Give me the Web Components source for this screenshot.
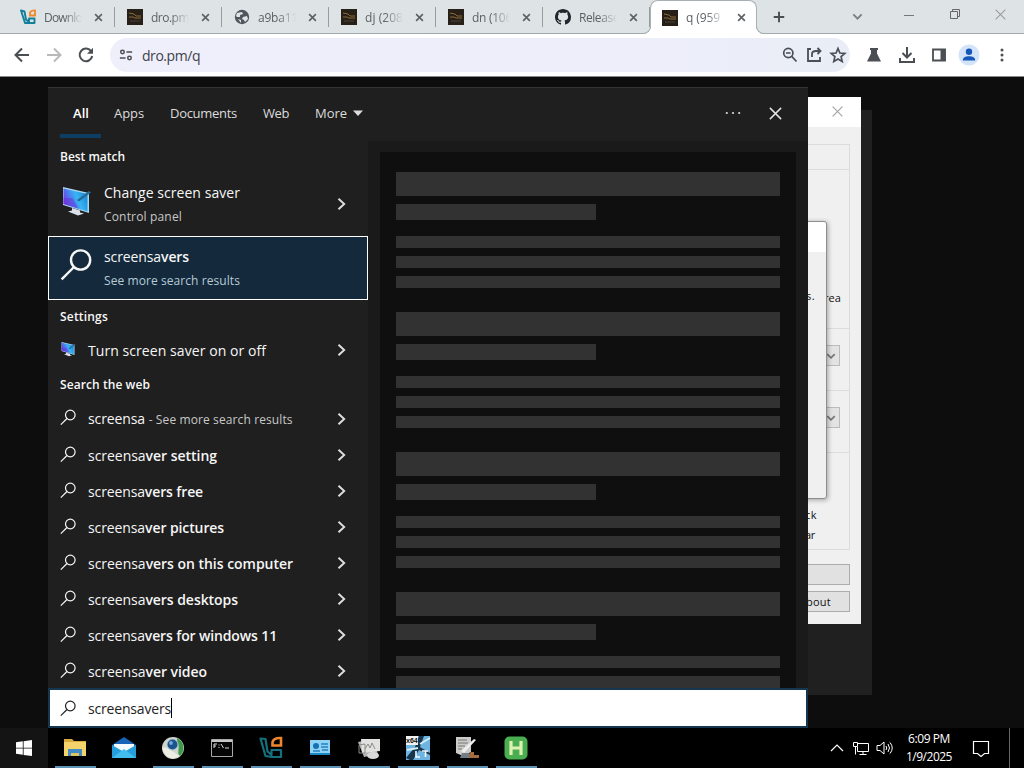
<!DOCTYPE html>
<html lang="en">
<head>
<meta charset="utf-8">
<title>Desktop</title>
<style>
html,body{margin:0;height:100%;overflow:hidden;background:#0d0d0d}
body{font-family:"Open Sans","Noto Sans",sans-serif;font-size:14px}
</style>
</head>
<body>
<desktop-screen></desktop-screen>
<script>
const define = (name, html, setup) => customElements.define(name, class extends HTMLElement {
  connectedCallback() {
    if (this.shadowRoot) return;
    const root = this.attachShadow({mode: 'open'});
    root.innerHTML = typeof html === 'function' ? html(this) : html;
    if (setup) setup(this, root);
  }
});

/* ---------- icons ---------- */
const monitor = `<defs><linearGradient id="g" x1="0" y1=".7" x2="1" y2=".3"><stop offset="0" stop-color="#7a2fe0"/><stop offset=".35" stop-color="#4a80f0"/><stop offset=".6" stop-color="#38b5f3"/><stop offset="1" stop-color="#1c86d8"/></linearGradient></defs><path d="M3 2l26 6v20L3 20z" fill="#a9d8ef"/><path d="M3.500 3.500L27.500 9v17.500L3.500 19z" fill="url(#g)"/><path d="M3.500 13l9 0 6 10.700L3.500 19z" fill="#6a2fd8" opacity=".5"/><path d="M17 15L29 6l2 1.500-12 9z" fill="#246b98"/><path d="M12 23l8 2.500v2l4 1-6 2-10-4 4-1z" fill="#dce0ea"/>`;
const lens = `<circle cx="10.300" cy="6" r="4.800" fill="none" stroke="currentColor" stroke-width="1.200"/><path d="M7 9.500L.8 15.700" stroke="currentColor" stroke-width="1.200"/>`;
const icons = {
  vs: [16, `<path d="M1 1.500l3.500 1 1.500 8 3 2.500V9.500h5.500v4.500H9.500L5 14z" fill="none" stroke="#137f9a" stroke-width="1.900" stroke-linejoin="round"/><path d="M10 6.500V3.500q1.500-2.500 5-2v5z" fill="none" stroke="#ee8a2b" stroke-width="1.900"/>`],
  dro: [16, `<path fill="#272019" d="M0 0h16v16H0z"/><path d="M2 4l5 1 2 2h5M2 8h4l2 1h6" stroke="#8d6a35" fill="none"/><path d="M3 12h10" stroke="#4d4336"/>`],
  globe: [16, `<circle cx="8" cy="8" r="7.200" fill="#50565c"/><path d="M3 4l5-1 1 2-3 1v2H3l-1-1zM9 8l4-1 1 3-3 3-1-2-2-1zM4 10l3 1v3z" fill="#dfe4e7"/>`],
  github: [16, `<path fill="#20262c" d="M8 0C3.580 0 0 3.580 0 8c0 3.540 2.290 6.530 5.470 7.590.4.070.55-.17.55-.38 0-.19-.01-.82-.01-1.490-2.010.37-2.530-.49-2.690-.94-.09-.23-.48-.94-.82-1.130-.28-.15-.68-.52-.01-.53.63-.01 1.080.58 1.230.82.72 1.210 1.870.87 2.330.66.07-.52.28-.87.51-1.070-1.780-.2-3.640-.89-3.640-3.950 0-.87.31-1.590.82-2.150-.08-.2-.36-1.020.08-2.120 0 0 .67-.21 2.200.82.64-.18 1.320-.27 2-.27s1.360.09 2 .27c1.530-1.040 2.200-.82 2.200-.82.44 1.100.16 1.920.08 2.120.51.56.82 1.270.82 2.150 0 3.070-1.870 3.750-3.650 3.950.29.25.54.73.54 1.480 0 1.070-.01 1.930-.01 2.200 0 .21.15.46.55.38A8 8 0 0 0 16 8c0-4.420-3.580-8-8-8z"/>`],
  x: [16, `<path d="M2 2l12 12M14 2L2 14" stroke="currentColor" stroke-width="var(--sw,2.900)" fill="none"/>`],
  plus: [16, `<path d="M8 2v12M2 8h12" stroke="currentColor" stroke-width="2.200"/>`],
  down: [16, `<path d="M2 5l6 6 6-6" stroke="currentColor" stroke-width="2.800" fill="none"/>`],
  right: [16, `<path d="M4 2l6.500 6L4 14" stroke="currentColor" stroke-width="2.200" fill="none"/>`],
  min: [12, `<path d="M1 6.500h10" stroke="currentColor"/>`],
  restore: [12, `<path d="M1.500 3.500h7v7h-7zM3.500 3.500v-2h7v7h-2" fill="none" stroke="currentColor"/>`],
  back: [16, `<path d="M15 8H2M8 1.500L1.500 8 8 14.500" fill="none" stroke="currentColor" stroke-width="2"/>`],
  fwd: [16, `<path d="M1 8h13M8 1.500L14.500 8 8 14.500" fill="none" stroke="currentColor" stroke-width="2"/>`],
  reload: [16, `<path d="M13.300 4.500A6.300 6.300 0 1 0 14.200 9" fill="none" stroke="currentColor" stroke-width="2"/><path d="M15 .8v6H9z" fill="currentColor"/>`],
  tune: [16, `<g fill="none" stroke="currentColor" stroke-width="1.700"><circle cx="4" cy="4.500" r="2"/><path d="M8.500 4.500H15M1 11.500h6.500"/><circle cx="12" cy="11.500" r="2"/></g>`],
  zoomout: [16, `<g fill="none" stroke="currentColor" stroke-width="1.700"><circle cx="6.300" cy="6" r="4.600"/><path d="M9.700 9.300l4.800 5.200M4 6h4.600"/></g>`],
  share: [16, `<g fill="none" stroke="currentColor" stroke-width="1.800"><path d="M5 2H2v12h12v-4M6 10V7q0-3 4-3h4M11.500 1l3 3-3 3"/></g>`],
  star: [16, `<path d="M8 1.500l1.900 4.500 4.900.4-3.700 3.200 1.100 4.800L8 11.900l-4.200 2.500 1.100-4.800L1.200 6.400 6.100 6z" fill="none" stroke="currentColor" stroke-width="1.700"/>`],
  flask: [16, `<path d="M4 1h8v2h-1v3.500l4 8H1l4-8V3H4z" fill="currentColor"/>`],
  download: [18, `<path d="M9 1v10M4.500 7L9 11.500 13.500 7M2 12v4h14v-4" fill="none" stroke="currentColor" stroke-width="2"/>`],
  side: [16, `<path d="M2 2.500h12v11H2z" fill="none" stroke="currentColor" stroke-width="1.800"/><path d="M9.500 2h5v12h-5z" fill="currentColor"/>`],
  person: [22, `<circle cx="11" cy="11" r="10.500" fill="#d3e3f8"/><circle cx="11" cy="7.800" r="3.200" fill="#1558b8"/><path d="M4.800 16.500c0-3 2.500-4.300 6.200-4.300s6.200 1.300 6.200 4.300z" fill="#1558b8"/>`],
  dots: [16, `<g fill="currentColor"><circle cx="8" cy="3" r="1.500"/><circle cx="8" cy="8" r="1.500"/><circle cx="8" cy="13" r="1.500"/></g>`],
  more: [18, `<g fill="currentColor"><circle cx="2.800" cy="9" r="1.100"/><circle cx="9" cy="9" r="1.100"/><circle cx="15.200" cy="9" r="1.100"/></g>`],
  caret: [10, `<path d="M0 2.500h10L5 8z" fill="currentColor"/>`],
  lens: [16, lens],
  monitor: [32, monitor],
  win: [16, `<path fill="#fff" d="M0 2.300l6.800-1v6.400H0zM7.600 1.200L16 0v7.700H7.600zM0 8.500h6.800v6.300L0 13.800zM7.600 8.500H16V16l-8.400-1.100z"/>`],
  folder: [24, `<path d="M1 3h8l2 2h12v15H1z" fill="#d8a93d"/><path d="M1 6h22v14H1z" fill="#f4d36b"/><path d="M5 13h14v7h-3v-3H8v3H5z" fill="#438bc4"/><path d="M8 17h8v3H8z" fill="#e2c25e"/>`],
  mail: [24, `<path d="M0 9l12-8 12 8v13H0z" fill="#1763b8"/><path d="M2 8h20v8H2z" fill="#f4f9fc"/><path d="M0 9l12 7 12-7v13H0z" fill="#269edb"/><path d="M0 22l12-9 12 9z" fill="#42bcec"/>`],
  orb: [24, `<circle cx="12" cy="12" r="11" fill="#cfd4cc"/><path d="M16 2a11 11 0 0 1 3 18c-4-3 1-8-3-14z" fill="#3d9b4b"/><path d="M1.500 12c5-2 9 3 17 8-8 6-16 0-17-8z" fill="#eceee4"/><circle cx="11.500" cy="8.500" r="6" fill="#b9c9d4"/><circle cx="11.500" cy="8.500" r="5" fill="#1b548f"/><circle cx="10" cy="7" r="1.900" fill="#76aad5"/>`],
  cmd: [24, `<path d="M1.500 3.500h21v17h-21z" fill="#050505" stroke="#a9a9a9"/><path d="M2 4h20v2H2z" fill="#c6c6c6"/><path d="M4 12V8h3M4 10h2M9 8.500v1M9 11v1M11 8l2.500 4M15 12h4" stroke="#ddd" fill="none"/>`],
  card: [24, `<path d="M2 4h20v15H2z" fill="#1788c5"/><path d="M2 4h20v13H2z" fill="#8fd2f5"/><circle cx="8" cy="10" r="3" fill="#1372b2"/><path d="M13 8h7M13 11h7M5 15h7M14 14h6" stroke="#2683bd" stroke-width="1.300"/>`],
  paper: [24, `<path d="M1 6l14-3 6 15-14 3z" fill="#b5b5b5"/><path d="M4 3h19l0 12-18 2z" fill="#e1e1df"/><path d="M8 13l3-5 2 4 2-5 3 6M2 9l6-1v9H2z" stroke="#8b8b8b" fill="none"/><ellipse cx="16" cy="19.500" rx="6" ry="3.500" fill="#d8d8d8"/>`],
  x64: [24, `<path d="M0 0h24v24H0z" fill="#6db4e0"/><path d="M0 22L9 11l4-11h5l-4 11 10 6v2l-11-5-6 10H4z" fill="#17364b"/><path d="M14 8l10-6M1 14l11-2" stroke="#d5ecf7" stroke-width="2"/><path d="M0 0h12v9H0z" fill="#f1f1ef"/><text x="0" y="7" font-size="7" font-weight="700" font-family="Liberation Sans" fill="#111">x64</text><path d="M10 15v6h4M16 15h6M19.500 15v6" stroke="#f5fbff" stroke-width="1.600" fill="none"/>`],
  tools: [24, `<path d="M1 1h15v15l-8 4-7-3z" fill="#cbcbc9"/><path d="M3 4h9M3 7h10M3 10h7M3 13h4" stroke="#777"/><path d="M6 15L19 3l2 1L9 17z" fill="#eee"/><path d="M13 19l3-3h3v3h5v3H12z" fill="#a36d43"/><path d="M7 17h7v5H5z" fill="#737d88"/>`],
  h: [24, `<rect x=".5" y=".5" width="23" height="23" rx="5" fill="#4aae50"/><path d="M7 5v14M17 5v14M7 12h10" stroke="#dff0b4" stroke-width="3.200"/>`],
  vstask: [24, `<path d="M1.500 2.500l5 .5 2 12.500 4 3.500v-5h9.500v7H13L6.500 20z" fill="none" stroke="#13707c" stroke-width="2.200" stroke-linejoin="round"/><path d="M13.500 9.500V6q1.500-4.500 8.500-4v7.500z" fill="none" stroke="#ee862e" stroke-width="2.600"/>`],
  up: [14, `<path d="M1 10l6-6 6 6" fill="none" stroke="#fff" stroke-width="1.200"/>`],
  net: [16, `<path d="M5 3.500h10.500v8H4.500V7M10 11.500v3M6.500 14.500h7M.5 2.500h4v4h-4zM2.500 6.500v8" fill="none" stroke="#fff"/>`],
  sound: [18, `<path d="M1 6.500h3L8 3v12l-4-3.500H1z" fill="none" stroke="#fff"/><path d="M10 7q1.500 2 0 4M12 5q3 4 0 8M14 3.500q4.500 5.500 0 11" fill="none" stroke="#fff"/>`],
  note: [18, `<path d="M1.500 2.500h15v12h-4l-3.500 3-3.500-3h-4z" fill="none" stroke="#fff" stroke-width="1.200"/>`],
};
define('ui-icon', el => {
  const [vb, art] = icons[el.getAttribute('name')];
  const s = el.getAttribute('size') || vb;
  return `<style>:host{display:block;flex:none;width:${s}px;height:${s}px}svg{display:block;overflow:visible}</style><svg width="${s}" height="${s}" viewBox="0 0 ${vb} ${vb}">${art}</svg>`;
});

/* ---------- browser ---------- */
define('browser-tab', el => `<style>
:host{display:flex;align-items:center;box-sizing:border-box;width:107px;height:33px;padding:1px 0 0 12px;position:relative;color:#5b6165;flex:none;font-size:12px}
:host([active]){background:#fff;border:1px solid #a9b0b3;border-bottom:0;border-radius:8px 8px 0 0;padding:0 0 0 11px;height:34px}
:host([active])::before,:host([active])::after{content:"";position:absolute;bottom:0;width:7px;height:7px;border-bottom:1px solid #a9b0b3}
:host([active])::before{left:-8px;border-right:1px solid #a9b0b3;border-bottom-right-radius:8px;box-shadow:3px 3px 0 1px #fff;clip-path:inset(0 -1px 0 0)}
:host([active])::after{right:-8px;border-left:1px solid #a9b0b3;border-bottom-left-radius:8px;box-shadow:-3px 3px 0 1px #fff;clip-path:inset(0 0 0 -1px)}
.t{width:40px;margin:0 8px;overflow:hidden;white-space:nowrap;-webkit-mask-image:linear-gradient(90deg,#000 50%,transparent 98%)}
i{width:1px;height:20px;background:#969c9f;margin-left:11px}
:host([active]) i{display:none}
</style><ui-icon name="${el.getAttribute('icon')}"></ui-icon><div class="t"><slot></slot></div><ui-icon name="x" size="9" style="margin-left:3px"></ui-icon><i></i>`);

define('browser-chrome', `<style>
:host{display:block;color:#4b4f53}
.strip{display:flex;height:34px;box-sizing:border-box;background:#dee4e6;border-bottom:1px solid #a2a9ad;padding-left:8px}
.ctl{display:flex;align-items:center;flex:1;height:31px;color:#4b4f53}
.bar{display:flex;align-items:center;height:43px;background:#fff;box-sizing:border-box;padding:0 14px 1px;border-bottom:1px solid #888}
.nav{display:flex;gap:16px;width:96px}
.omni{display:flex;align-items:center;width:740px;height:34px;box-sizing:border-box;border-radius:17px;background:linear-gradient(90deg,#efeffb,#eeeefb 65%,#e9eef6);padding:0 4px 0 9px}
.url{flex:1;margin-left:9px;padding-top:1px;color:#3c4149}
.acts{display:flex;gap:8px}
.ext{display:flex;align-items:center;justify-content:space-between;flex:1;margin-left:16px}
</style>
<div class="strip">
<browser-tab icon="vs"><fit-text w="38">Downlo</fit-text></browser-tab><browser-tab icon="dro"><fit-text w="38">dro.pm</fit-text></browser-tab><browser-tab icon="globe"><fit-text w="40">a9ba11</fit-text></browser-tab><browser-tab icon="dro"><fit-text w="38">dj (208</fit-text></browser-tab><browser-tab icon="dro"><fit-text w="40">dn (106</fit-text></browser-tab><browser-tab icon="github"><fit-text w="40">Release</fit-text></browser-tab><browser-tab icon="dro" active><fit-text w="34">q (959</fit-text></browser-tab>
<div class="ctl"><ui-icon name="plus" size="14" style="margin:3px 0 0 15px"></ui-icon><ui-icon name="down" size="11" style="margin:2px 0 0 66px;color:#7a8084"></ui-icon><ui-icon name="min" style="margin-left:40px;color:#777;margin-top:-2px"></ui-icon><ui-icon name="restore" style="margin:-3px 0 0 34px;color:#666"></ui-icon><ui-icon name="x" size="13" style="--sw:1.300;margin:-3px 0 0 33px;color:#999"></ui-icon></div>
</div>
<div class="bar"><div class="nav"><ui-icon name="back"></ui-icon><ui-icon name="fwd" style="color:#b9b9b9"></ui-icon><ui-icon name="reload"></ui-icon></div>
<div class="omni"><ui-icon name="tune" size="14"></ui-icon><div class="url"><fit-text w="58">dro.pm/q</fit-text></div><div class="acts"><ui-icon name="zoomout"></ui-icon><ui-icon name="share"></ui-icon><ui-icon name="star"></ui-icon></div></div>
<div class="ext"><ui-icon name="flask"></ui-icon><ui-icon name="download" style="margin:0 0 0 -1px"></ui-icon><ui-icon name="side" style="margin-left:-2px"></ui-icon><ui-icon name="person" style="margin:0 -3px 0 -5px"></ui-icon><ui-icon name="dots"></ui-icon></div></div>`);

/* ---------- dialog behind the menu ---------- */
define('about-dialog', `<style>
:host{display:block;background:#f0f0f0;width:100%;height:100%;color:#111;font-size:11px;line-height:16px}
.title{height:30px;background:#fff;display:flex;align-items:center;justify-content:flex-end;padding:0 17px 2px 0;box-sizing:border-box;color:#a5a5a5}
.body{padding:17px 11px 0 0;height:480px;box-sizing:border-box}
.group{border:1px solid #dcdcdc;box-sizing:border-box;height:406px}
.sec{box-sizing:border-box;border-bottom:1px solid #dcdcdc;display:flex;justify-content:flex-end}
.combo{width:18px;height:21px;box-sizing:border-box;border:1px solid #bbb;background:#e3e3e3;margin:16px 9px 0 0;display:grid;place-items:center;color:#777}
.btn{height:21px;box-sizing:border-box;border:1px solid #adadad;background:#e1e1e1;display:flex;align-items:center;justify-content:flex-end;padding-right:18px}
.btns{display:grid;gap:6px;margin-top:14px}
.lab{padding:52px 32px 0 0;text-align:right;line-height:20px}
</style>
<div class="title"><ui-icon name="x" size="13" style="--sw:1.500"></ui-icon></div>
<div class="body"><div class="group"><div class="sec" style="height:25px"></div><div class="sec" style="height:159px"><span style="margin:120px 8px 0 0"><fit-text w="17">rea</fit-text></span></div>
<div class="sec" style="height:62px"><div class="combo"><ui-icon name="down" size="10"></ui-icon></div></div><div class="sec" style="height:62px"><div class="combo"><ui-icon name="down" size="10"></ui-icon></div></div>
<div class="lab"><fit-text w="12">ck</fit-text><br><fit-text w="10" style="margin-right:2px">ar</fit-text></div></div>
<div class="btns"><div class="btn"></div><div class="btn"><fit-text w="25">bout</fit-text></div></div></div>`);
define('message-box', `<style>
:host{display:block;box-sizing:border-box;width:100%;height:100%;background:#f0f0f0;border:1px solid #8d8d8d;border-radius:0 3px 3px 0;box-shadow:1px 1px 5px #0005;font-size:11px;color:#111}
.t{height:30px;background:#fff;border-radius:0 3px 0 0}.m{padding:36px 11px 0 0;text-align:right}
</style><div class="t"></div><div class="m"><fit-text w="9">s.</fit-text></div>`);

/* ---------- search menu ---------- */
define('result-row', el => `<style>
:host{display:flex;align-items:center;box-sizing:border-box;height:36px;padding:0 19px 0 12px;color:#f6f6f6;white-space:nowrap}
:host([big]){height:64px}
:host([selected]){background:#14293b;border:1px solid #fff;padding:0 17px 0 11px}
.t{flex:1;margin-left:12px;line-height:20px;padding-top:2px}
:host([big]) .t{line-height:24px}
.s{font-size:12px;color:#c8c8c8;display:block}
:host([selected]) .s{color:#b6cbd8}
.lead{margin-top:-3px}
:host([big]) .lead{margin-top:-7px}
:host([selected]) .lead{margin-top:-9px}
.go{color:#dedede}
</style><ui-icon class="lead" name="${el.getAttribute('icon') || 'lens'}" size="${el.hasAttribute('big') ? 32 : 16}"></ui-icon><div class="t"><slot></slot><span class="s"><slot name="sub"></slot></span></div>${el.hasAttribute('selected') ? '' : '<ui-icon class="go" name="right" size="14"></ui-icon>'}`);

define('group-title', `<style>:host{display:flex;align-items:center;box-sizing:border-box;height:32px;padding-left:12px;font-size:12px;font-weight:600;color:#f8f8f8}</style><slot></slot>`);

define('skeleton-card', `<style>
:host{display:block;height:140px;flex:none}
div{background:#323232;height:12px;margin-bottom:8px}
div.a{height:24px}div.b{height:16px;width:200px;margin-bottom:16px}
</style><div class="a"></div><div class="b"></div><div></div><div></div><div></div>`);

const bold = s => `<b style="font-weight:600">${s}</b>`;
const web = [['screensa','ver setting',129],['screensa','vers free',115],['screensa','ver pictures',136],['screensa','vers on this computer',205],['screensa','vers desktops',150],['screensa','vers for windows 11',189],['screensa','ver video',119]];
define('search-menu', `<style>
:host{display:flex;flex-direction:column;box-sizing:border-box;width:100%;height:100%;background:#1f1f1f;color:#fff;border-top:1px solid #333}
nav{display:flex;height:53px;flex:none;box-sizing:border-box;padding-left:12px;font-size:13px;color:#dcdcdc}
nav span{display:flex;align-items:center;height:50px;box-sizing:border-box}
nav .on{width:41px;padding-left:13px;border-bottom:4px solid #0d3f66;border-top:4px solid transparent;color:#fff;font-weight:600}
.main{display:flex;flex:1;min-height:0}
.list{width:320px;flex:none}
.prev{flex:1;background:#1a1a1a;padding:11px 12px 0;overflow:hidden;min-width:0}
.inner{background:#0f0f0f;height:100%;box-sizing:border-box;padding:20px 16px 0;overflow:hidden}
.box{height:40px;flex:none;box-sizing:border-box;border:2px solid #14364f;background:#fff;display:flex;align-items:center;padding-left:10px;color:#222}
.box i{width:1px;height:20px;background:#000}
group-title.first{height:31px}
</style>
<nav><span class="on"><fit-text w="16">All</fit-text></span><span style="margin-left:13px"><fit-text w="30">Apps</fit-text></span><span style="margin-left:26px"><fit-text w="67">Documents</fit-text></span><span style="margin-left:26px"><fit-text w="26">Web</fit-text></span><span style="margin-left:26px"><fit-text w="32">More</fit-text></span><span style="margin-left:6px"><ui-icon name="caret"></ui-icon></span><span style="margin-left:auto"><ui-icon name="more"></ui-icon></span><span style="margin:0 25px 0 26px"><ui-icon name="x" size="15" style="--sw:1.600;color:#e0e0e0"></ui-icon></span></nav>
<div class="main"><div class="list">
<group-title class="first"><fit-text w="65">Best match</fit-text></group-title>
<result-row big icon="monitor"><fit-text w="136">Change screen saver</fit-text><fit-text slot="sub" w="78">Control panel</fit-text></result-row>
<result-row big selected><fit-text w="85">screensa${bold('vers')}</fit-text><fit-text slot="sub" w="136">See more search results</fit-text></result-row>
<group-title><fit-text w="48">Settings</fit-text></group-title>
<result-row icon="monitor"><fit-text w="178">Turn screen saver on or off</fit-text></result-row>
<group-title><fit-text w="90">Search the web</fit-text></group-title>
<result-row style="height:37px"><fit-text w="57">screensa</fit-text> <fit-text w="144" style="font-size:12px;color:#c8c8c8">- See more search results</fit-text></result-row>
${web.map(([a, b, w]) => `<result-row><fit-text w="${w}">${a}${bold(b)}</fit-text></result-row>`).join('')}
</div><div class="prev"><div class="inner"><skeleton-card></skeleton-card><skeleton-card></skeleton-card><skeleton-card></skeleton-card><skeleton-card></skeleton-card></div></div></div>
<div class="box"><ui-icon name="lens"></ui-icon><span style="margin-left:12px"><fit-text w="83">screensavers</fit-text></span><i></i></div>`);

/* ---------- taskbar ---------- */
const apps = ['folder', 'mail', 'orb', 'cmd', 'vstask', 'card', 'paper', 'x64', 'tools', 'h'];
define('task-bar', `<style>
:host{display:flex;box-sizing:border-box;height:40px;background:#000;color:#fff}
.start{width:48px;background:#141414;display:grid;place-items:center}
.apps{display:flex;gap:8px;margin-left:7px}
.app{width:41px;height:40px;box-sizing:border-box;border-bottom:2px solid #5e93b8;display:flex;align-items:center;padding:2px 0 0 8px}
.app.off{border-color:transparent}
.tray{margin-left:auto;display:flex;align-items:center}
.clock{width:60px;text-align:center;font-size:12px;line-height:18px}
.end{width:14px;height:40px;border-left:1px solid #666}
</style><div class="start"><ui-icon name="win"></ui-icon></div>
<div class="apps">${apps.map(a => `<div class="app${a === 'mail' ? ' off' : ''}"><ui-icon name="${a}"></ui-icon></div>`).join('')}</div>
<div class="tray"><ui-icon name="up"></ui-icon><ui-icon name="net" style="margin-left:9px"></ui-icon><ui-icon name="sound" style="margin-left:7px"></ui-icon><div class="clock" style="margin-left:5px"><fit-text w="42">6:09 PM</fit-text><br><fit-text w="46">1/9/2025</fit-text></div><ui-icon name="note" style="margin:0 19px 0 13px"></ui-icon><div class="end"></div></div>`);

define('desktop-screen', `<style>
:host{display:flex;flex-direction:column;width:1024px;height:768px;overflow:hidden}
.area{flex:1;position:relative;background:#0d0d0d}
.w{position:absolute}
</style><browser-chrome></browser-chrome>
<div class="area">
<div class="w" style="left:700px;top:33px;width:172px;height:585px;background:#202020"></div>
<div class="w" style="left:700px;top:20px;width:161px;height:527px"><about-dialog></about-dialog></div>
<div class="w" style="left:700px;top:144px;width:127px;height:278px"><message-box></message-box></div>
<div class="w" style="left:48px;top:10px;width:760px;height:641px"><search-menu></search-menu></div>
</div><task-bar></task-bar>`);

/* Inline text that is tracked to a given advance width; registered last so its surroundings are laid out. */
define('fit-text', `<style>:host{display:inline-block;white-space:pre}</style><slot></slot>`, el => {
  const w = +el.getAttribute('w');
  const now = el.getBoundingClientRect().width;
  el.style.letterSpacing = ((w - now) / el.textContent.length).toFixed(3) + 'px';
});
</script>
</body>
</html>
